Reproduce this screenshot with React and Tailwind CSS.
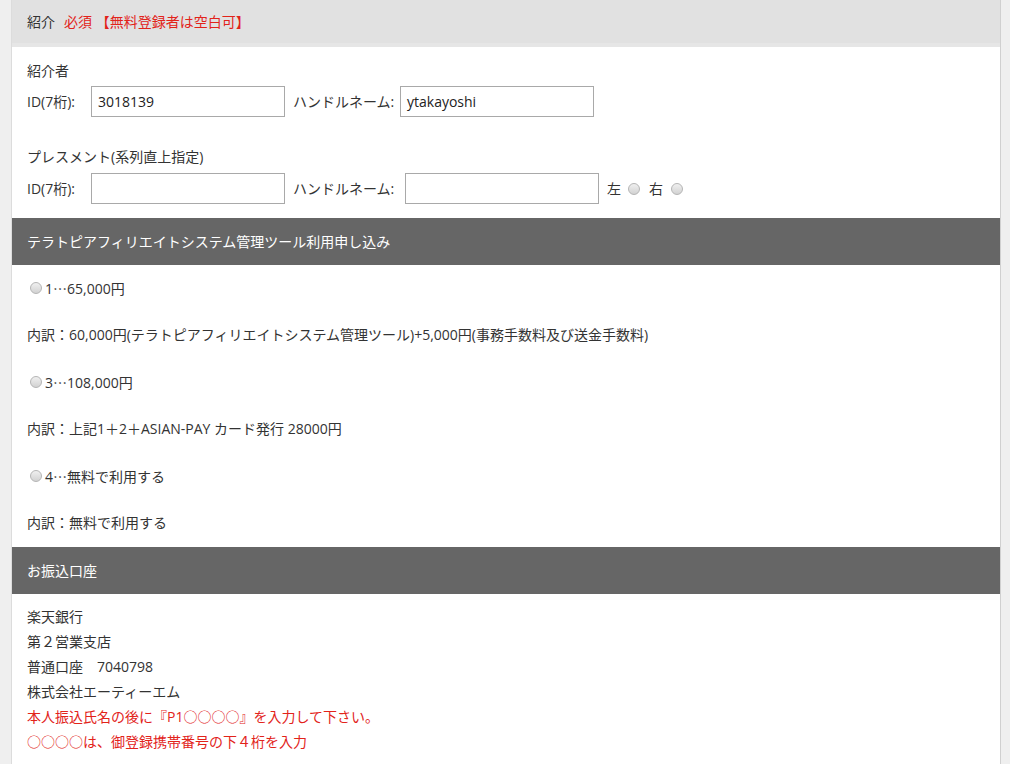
import React from 'react';

const font = { fontFamily: '"Open Sans", "Noto Sans CJK JP", sans-serif' };
const cjk = { fontFamily: '"Noto Sans CJK JP", sans-serif' };

const Radio = () => (
  <span className="inline-block w-[12px] h-[12px] rounded-full border border-[#b5b5b5] bg-gradient-to-b from-[#f0f0f0] to-[#d2d2d2] align-[-1px]" />
);

const TextInput = ({ value, width }) => (
  <div className={`h-[31px] ${width} border border-[#a9a9a9] bg-white px-[6px] flex items-center text-[14px] text-[#222]`}>
    {value}
  </div>
);

const SectionHeader = ({ children, dark }) => (
  <div
    className={`h-[47px] flex items-center px-[15px] text-[14px] ${
      dark ? 'bg-[#666666] text-white' : 'bg-[#e1e1e1] text-[#333] border-b-[4px] border-[#e6e6e6]'
    }`}
  >
    {children}
  </div>
);

const Dots = () => <span style={cjk}>…</span>;

const Option = ({ children }) => (
  <div className="h-[20px] flex items-center gap-[3px] pl-[3px] mt-[27px] first:mt-0 overflow-hidden">
    <Radio />
    <span className="leading-[20px]">{children}</span>
  </div>
);

const App = () => {
  return (
    <div className="w-[1010px] h-[764px] overflow-hidden bg-[#eeeeee] flex" style={font}>
      <div className="w-[11px] bg-[#efefef]" />
      <div className="w-[1px] bg-[#dcdcdc]" />
      <div className="w-[988px] bg-white text-[#333] text-[14px]">
        <SectionHeader>
          <span>紹介</span>
          <span className="ml-[9px] text-[#e2231a]">必須 【無料登録者は空白可】</span>
        </SectionHeader>

        <div className="px-[15px] pt-[14px] pb-[14px]">
          <div className="leading-[20px]">紹介者</div>
          <div className="flex items-center mt-[5px]">
            <span className="w-[64px] whitespace-nowrap">ID(7桁):</span>
            <TextInput value="3018139" width="w-[194px]" />
            <span className="ml-[8px] w-[107px] whitespace-nowrap">ハンドルネーム:</span>
            <TextInput value="ytakayoshi" width="w-[194px]" />
          </div>

          <div className="leading-[20px] mt-[30px]">プレスメント(系列直上指定)</div>
          <div className="flex items-center mt-[6px]">
            <span className="w-[64px] whitespace-nowrap">ID(7桁):</span>
            <TextInput value="" width="w-[194px]" />
            <span className="ml-[8px] w-[112px] whitespace-nowrap">ハンドルネーム:</span>
            <TextInput value="" width="w-[194px]" />
            <span className="ml-[8px]">左</span>
            <span className="ml-[7px] flex"><Radio /></span>
            <span className="ml-[9px]">右</span>
            <span className="ml-[8px] flex"><Radio /></span>
          </div>
        </div>

        <SectionHeader dark>テラトピアフィリエイトシステム管理ツール利用申し込み</SectionHeader>

        <div className="px-[15px] pt-[13px] pb-[14px]">
          <Option>1<Dots />65,000円</Option>
          <div className="mt-[27px] h-[20px] leading-[20px]">内訳：60,000円(テラトピアフィリエイトシステム管理ツール)+5,000円(事務手数料及び送金手数料)</div>
          <Option>3<Dots />108,000円</Option>
          <div className="mt-[27px] h-[20px] leading-[20px]">内訳：上記1＋2＋ASIAN-PAY カード発行 28000円</div>
          <Option>4<Dots />無料で利用する</Option>
          <div className="mt-[27px] h-[20px] leading-[20px]">内訳：無料で利用する</div>
        </div>

        <SectionHeader dark>お振込口座</SectionHeader>

        <div className="px-[15px] pt-[10px] leading-[25px]">
          <div>楽天銀行</div>
          <div>第２営業支店</div>
          <div>普通口座　7040798</div>
          <div>株式会社エーティーエム</div>
          <div className="text-[#e2231a]">本人振込氏名の後に『P1○○○○』を入力して下さい。</div>
          <div className="text-[#e2231a]">○○○○は、御登録携帯番号の下４桁を入力</div>
        </div>
      </div>
      <div className="w-[1px] bg-[#d0d0d0]" />
      <div className="flex-1 bg-[#efefef]" />
    </div>
  );
};

export default App;
